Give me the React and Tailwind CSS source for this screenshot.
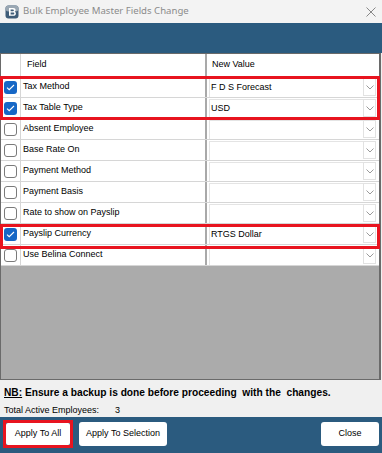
import { useState } from 'react';

const rows = [
  { field: 'Tax Method', value: 'F D S Forecast', checked: true },
  { field: 'Tax Table Type', value: 'USD', checked: true },
  { field: 'Absent Employee', value: '', checked: false },
  { field: 'Base Rate On', value: '', checked: false },
  { field: 'Payment Method', value: '', checked: false },
  { field: 'Payment Basis', value: '', checked: false },
  { field: 'Rate to show on Payslip', value: '', checked: false },
  { field: 'Payslip Currency', value: 'RTGS Dollar', checked: true },
  { field: 'Use Belina Connect', value: '', checked: false },
];

function CheckBox({ checked, onChange }) {
  if (checked) {
    return (
      <button onClick={onChange} className="w-[13px] h-[13px] rounded-[3px] bg-[#1667c6] flex items-center justify-center">
        <svg width="9" height="7" viewBox="0 0 9 7" fill="none">
          <path d="M1 3.6l2.2 2.1L8 1" stroke="white" strokeWidth="1.1" />
        </svg>
      </button>
    );
  }
  return (
    <button onClick={onChange} className="w-[13px] h-[13px] rounded-[3px] bg-white border border-[#7a7a7a]"></button>
  );
}

function Chevron() {
  return (
    <svg width="8" height="5" viewBox="0 0 8 5" fill="none">
      <path d="M0.5 0.5l3.5 3.5 3.5-3.5" stroke="#9a9a9a" strokeWidth="1" />
    </svg>
  );
}

export default function App() {
  const [items, setItems] = useState(rows);

  const toggle = (i) => {
    setItems(items.map((r, idx) => (idx === i ? { ...r, checked: !r.checked } : r)));
  };

  return (
    <div className="w-[382px] h-[453px] bg-[#f0f0f0] flex flex-col overflow-hidden font-['Liberation_Sans',Arial,sans-serif] text-[9px] text-black">
      {/* title bar */}
      <div className="h-[23px] bg-[#f3f3f3] flex items-center pl-[5px] pr-[6px]">
        <svg width="14" height="14" viewBox="0 0 14 14">
          <rect x="0.5" y="0.5" width="13" height="13" rx="3" fill="#3e5c78" />
          <rect x="0.5" y="0.5" width="13" height="6" rx="3" fill="#9aa7b3" />
          <path d="M4 3h4.2c1.6 0 2.4.8 2.4 2 0 .8-.5 1.4-1.2 1.6.9.2 1.5.9 1.5 1.9 0 1.4-1 2.3-2.7 2.3H4z" fill="white" />
          <path d="M5.6 4.4v1.8h2.3c.6 0 1-.3 1-.9s-.4-.9-1-.9zM5.6 7.5v2h2.6c.7 0 1.1-.4 1.1-1s-.4-1-1.1-1z" fill="#3e5c78" />
        </svg>
        <span className="ml-[4px] text-[9.6px] text-[#8b8b8b] font-['Noto_Sans',sans-serif]">Bulk Employee Master Fields Change</span>
        <svg className="ml-auto" width="10" height="10" viewBox="0 0 10 10">
          <path d="M0.5 0.5l9 9M9.5 0.5l-9 9" stroke="#7a7a7a" strokeWidth="0.9" />
        </svg>
      </div>

      {/* blue band */}
      <div className="h-[30px] bg-[#2b5b7f]"></div>

      {/* grid */}
      <div className="relative h-[327px] w-[381px] border border-r-2 border-[#6a6a6a] bg-[#ababab] flex flex-col">
        <div className="h-[23px] bg-white flex border-b border-[#d6d6d6]">
          <div className="w-[20px] border-r border-[#d6d6d6]"></div>
          <div className="w-[186px] border-r-2 border-[#a9a9a9] flex items-center pl-[6px]">Field</div>
          <div className="flex-1 flex items-center pl-[5px]">New Value</div>
        </div>
        {items.map((r, i) => (
          <div key={r.field} className="h-[21px] bg-white flex border-b border-[#d6d6d6]">
            <div className="w-[20px] border-r border-[#d6d6d6] flex items-center justify-center">
              <CheckBox checked={r.checked} onChange={() => toggle(i)} />
            </div>
            <div className="w-[186px] border-r-2 border-[#a9a9a9] flex items-center pl-[2px]">{r.field}</div>
            <div className="flex-1 flex items-center pl-[2px] pr-[3px]">
              <div className="flex-1 h-[19px] flex items-center pl-[1px] border-t border-l border-[#e4e4e4]">{r.value}</div>
              <div className="w-[13px] h-[18px] bg-white border border-[#e2e2e2] flex items-center justify-center">
                <Chevron />
              </div>
            </div>
          </div>
        ))}

        {/* highlight boxes */}
        <div className="absolute left-[-1px] top-[22px] w-[380px] h-[44px] border-[3px] border-[#e8141f]"></div>
        <div className="absolute left-[-1px] top-[170px] w-[380px] h-[25px] border-[3px] border-[#e8141f]"></div>
      </div>

      {/* info */}
      <div className="h-[37px] px-[4px] pt-[5px] flex flex-col">
        <div className="font-bold text-[10.2px] whitespace-pre">
          <span className="underline">NB:</span> Ensure a backup is done before proceeding  with the  changes.
        </div>
        <div className="mt-[4px] flex text-[9px]">
          <span className="w-[111px]">Total Active Employees:</span>
          <span>3</span>
        </div>
      </div>

      {/* footer */}
      <div className="h-[36px] bg-[#2b5b7f] flex items-center px-[3px] pb-[2px]">
        <div className="border-[3px] border-[#e8141f]">
          <button className="w-[64px] h-[22px] bg-white rounded-[2px]">Apply To All</button>
        </div>
        <button className="ml-[6px] w-[88px] h-[24px] bg-white rounded-[3px]">Apply To Selection</button>
        <button className="ml-auto w-[58px] h-[24px] bg-white rounded-[3px]">Close</button>
      </div>
    </div>
  );
}
